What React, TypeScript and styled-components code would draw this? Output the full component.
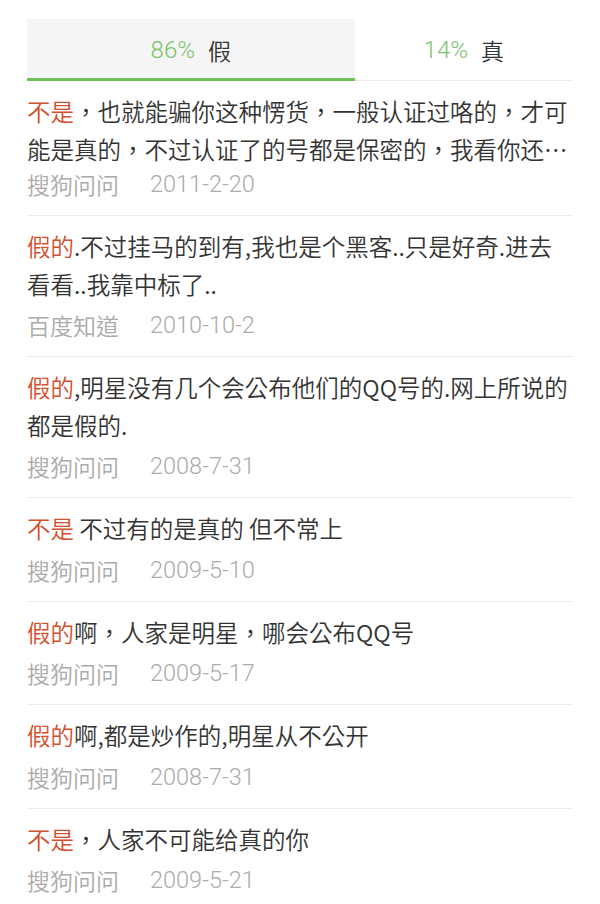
import React from "react";
import styled, { createGlobalStyle } from "styled-components";

const GlobalStyle = createGlobalStyle`
  html, body {
    margin: 0;
    padding: 0;
    background: #ffffff;
  }
  body {
    font-family: "Noto Sans CJK TC", "Noto Sans CJK SC", "Noto Sans", sans-serif;
    -webkit-font-smoothing: antialiased;
  }
`;

const Page = styled.div`
  width: 600px;
  box-sizing: border-box;
  padding: 19px 27px 0;
  background: #fff;
`;

const Tabs = styled.div`
  display: flex;
  align-items: stretch;
  height: 62px;
`;

const Tab = styled.div<{ $active?: boolean; $share: number }>`
  flex: 0 0 ${(p) => p.$share}%;
  box-sizing: border-box;
  display: flex;
  align-items: center;
  justify-content: center;
  padding-top: ${(p) => (p.$active ? "2px" : "1px")};
  background: ${(p) => (p.$active ? "#f5f5f5" : "#ffffff")};
  border-bottom: ${(p) => (p.$active ? "3px solid #6fbf5a" : "1px solid #ececec")};
`;

const Percent = styled.span`
  font-family: "Roboto", "Liberation Sans", sans-serif;
  font-weight: 300;
  font-size: 24px;
  color: #7cc46a;
`;

const TabLabel = styled.span`
  margin-left: 13px;
  font-family: "Noto Sans CJK TC", "Noto Sans CJK SC", sans-serif;
  font-weight: 350;
  font-size: 23px;
  color: #333333;
`;

const List = styled.div`
  display: flex;
  flex-direction: column;
`;

const Item = styled.div`
  padding: 12px 0 12px;
  border-bottom: 1px solid #ececec;
  &:last-child {
    border-bottom: none;
  }
`;

const Title = styled.div`
  font-family: "Noto Sans CJK TC", "Noto Sans CJK SC", sans-serif;
  font-weight: 350;
  font-size: 23.5px;
  line-height: 37.5px;
  color: #333333;
  display: -webkit-box;
  -webkit-line-clamp: 2;
  -webkit-box-orient: vertical;
  overflow: hidden;
  word-break: break-all;
`;

const Verdict = styled.span`
  color: #d2502d;
`;

const Meta = styled.div<{ $tight?: boolean }>`
  display: flex;
  align-items: center;
  margin-top: ${(p) => (p.$tight ? "-3px" : "3px")};
  height: 38px;
  color: #ababab;
  font-size: 23px;
`;

const Source = styled.span`
  font-family: "Noto Sans CJK TC", "Noto Sans CJK SC", sans-serif;
  font-weight: 350;
`;

const DateText = styled.span`
  margin-left: 31px;
  font-family: "Roboto", "Liberation Sans", sans-serif;
  font-weight: 300;
  font-size: 23.5px;
  color: #ababab;
`;

type Answer = {
  verdict: string;
  text: string;
  source: string;
  date: string;
  tight?: boolean;
};

const answers: Answer[] = [
  {
    verdict: "不是",
    text: "，也就能骗你这种愣货，一般认证过咯的，才可能是真的，不过认证了的号都是保密的，我看你还…",
    source: "搜狗问问",
    date: "2011-2-20",
    tight: true,
  },
  {
    verdict: "假的",
    text: ".不过挂马的到有,我也是个黑客..只是好奇.进去看看..我靠中标了..",
    source: "百度知道",
    date: "2010-10-2",
  },
  {
    verdict: "假的",
    text: ",明星没有几个会公布他们的QQ号的.网上所说的都是假的.",
    source: "搜狗问问",
    date: "2008-7-31",
  },
  {
    verdict: "不是",
    text: " 不过有的是真的 但不常上",
    source: "搜狗问问",
    date: "2009-5-10",
  },
  {
    verdict: "假的",
    text: "啊，人家是明星，哪会公布QQ号",
    source: "搜狗问问",
    date: "2009-5-17",
  },
  {
    verdict: "假的",
    text: "啊,都是炒作的,明星从不公开",
    source: "搜狗问问",
    date: "2008-7-31",
  },
  {
    verdict: "不是",
    text: "，人家不可能给真的你",
    source: "搜狗问问",
    date: "2009-5-21",
  },
];

export default function App() {
  return (
    <>
      <GlobalStyle />
      <Page>
        <Tabs>
          <Tab $active $share={60}>
            <Percent>86%</Percent>
            <TabLabel>假</TabLabel>
          </Tab>
          <Tab $share={40}>
            <Percent>14%</Percent>
            <TabLabel>真</TabLabel>
          </Tab>
        </Tabs>
        <List>
          {answers.map((a, i) => (
            <Item key={i}>
              <Title>
                <Verdict>{a.verdict}</Verdict>
                {a.text}
              </Title>
              <Meta $tight={a.tight}>
                <Source>{a.source}</Source>
                <DateText>{a.date}</DateText>
              </Meta>
            </Item>
          ))}
        </List>
      </Page>
    </>
  );
}
